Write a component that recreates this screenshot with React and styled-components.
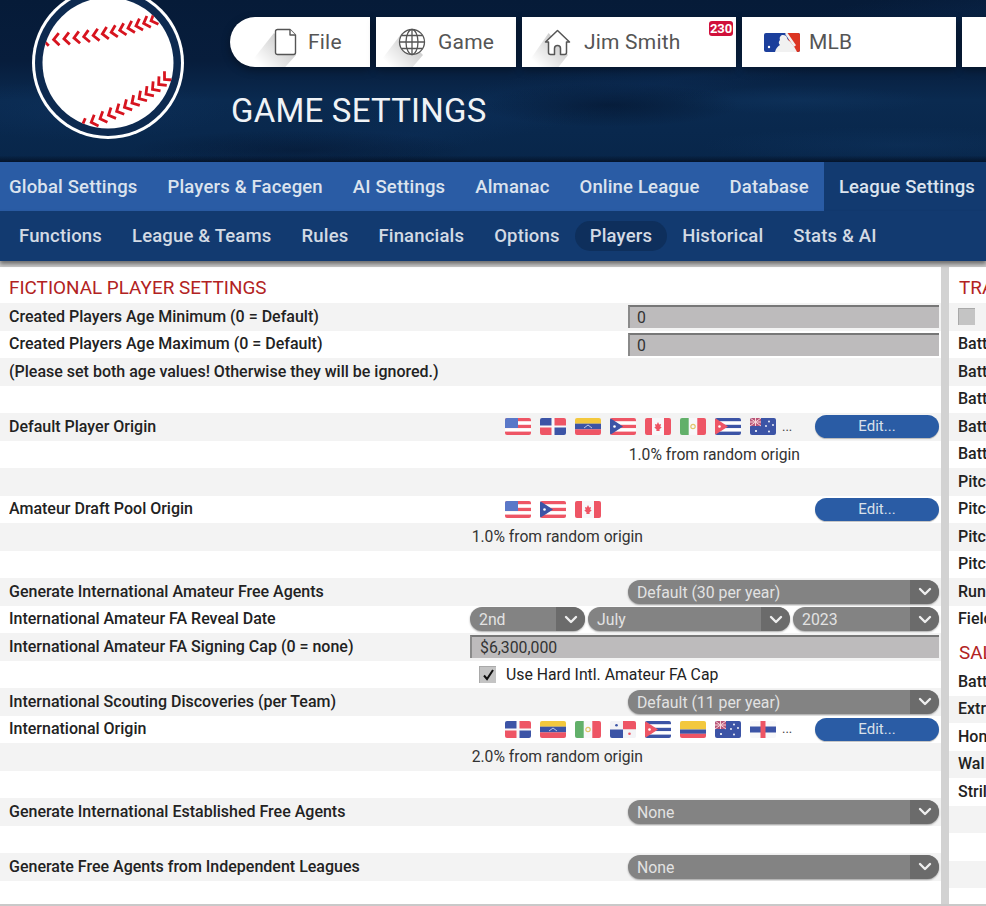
import React from "react";
import styled, { createGlobalStyle } from "styled-components";

const Global = createGlobalStyle`
  html, body { margin: 0; padding: 0; background: #fff; }
  body { width: 986px; height: 906px; overflow: hidden; font-family: Roboto, "Liberation Sans", sans-serif; }
  * { box-sizing: border-box; }
`;

const Page = styled.div`
  width: 986px; height: 906px; display: flex; flex-direction: column; overflow: hidden; background: #c9c9c9;
`;
const Header = styled.header`
  height: 162px; flex: none; display: flex; overflow: hidden;
  background:
    linear-gradient(180deg, rgba(3,14,32,0) 96%, rgba(3,14,32,.75) 100%),
    radial-gradient(ellipse 130px 22px at 610px 105px, rgba(4,20,44,.6), rgba(4,20,44,0)),
    radial-gradient(ellipse 170px 20px at 300px 150px, rgba(4,20,44,.5), rgba(4,20,44,0)),
    radial-gradient(ellipse 130px 14px at 800px 100px, rgba(20,60,105,.3), rgba(20,60,105,0)),
    radial-gradient(ellipse 200px 18px at 900px 145px, rgba(18,58,105,.3), rgba(18,58,105,0)),
    radial-gradient(ellipse 150px 30px at 80px 110px, rgba(16,54,100,.35), rgba(16,54,100,0)),
    linear-gradient(168deg, rgba(14,50,96,0) 50%, rgba(14,50,96,.25) 60%, rgba(14,50,96,0) 66%),
    linear-gradient(180deg, #061b38 0%, #071d3c 38%, #0a2a50 62%, #08264a 100%);
`;
const Logo = styled.svg`
  flex: none; width: 156px; height: 156px; margin: -15px 0 0 30px;
`;
const HeaderMain = styled.div`
  flex: none; margin-left: 44px; padding-top: 17px; display: flex; flex-direction: column;
`;
const NavRow = styled.nav`
  display: flex; gap: 6px; width: 800px;
`;
const NavButton = styled.div`
  position: relative; flex: none; height: 50px; width: ${p => p.$w}px; background: #fff; overflow: hidden;
  display: flex; align-items: center; padding-left: ${p => p.$pad}px; gap: ${p => p.$gap}px;
  border-radius: ${p => (p.$first ? "25px 0 0 25px" : "0")};
  box-shadow: 0 3px 8px rgba(0,0,0,.35);
  color: #555; font-size: 21px; letter-spacing: .2px;
`;
const Badge = styled.span`
  position: absolute; left: 187px; top: 4px; width: 24px; height: 15px; background: #d0103a; color: #fff;
  border-radius: 3px; font-size: 13px; line-height: 15px; font-weight: 700; text-align: center; letter-spacing: -.2px;
`;
const LongShadow = styled.span`
  position: absolute; left: ${p => p.$x}px; bottom: 0; width: ${p => p.$w}px; height: 34px;
  background: linear-gradient(45deg, rgba(0,0,0,0) 18%, rgba(0,0,0,.2) 78%);
  clip-path: polygon(55% 0, 0 100%, 78% 100%, 100% 65%);
`;
const IconGlyph = styled.svg`
  position: relative; flex: none; display: block;
`;
const NavLabel = styled.span`
  position: relative;
`;
const Title = styled.h1`
  margin: 25px 0 0 1px; color: #f0f3f6; font-weight: 400; font-size: 33px; line-height: 38px; letter-spacing: .22px; white-space: nowrap;
`;
const TabBar = styled.div`
  height: 49px; flex: none; display: flex; background: #2a5ca5; color: #dbe3ee;
`;
const Tab = styled.div`
  padding: 0 15px; display: flex; align-items: center; font-size: 18.5px; font-weight: 500; letter-spacing: .17px; white-space: nowrap;
  &:first-child { padding-left: 9px; }
  ${p => p.$active && "background:#123a70; flex:1;"}
`;
const SubBar = styled.div`
  height: 50px; flex: none; display: flex; align-items: center; padding-left: 4px; background: #123a70; color: #d3dae4;
  box-shadow: 0 3px 4px rgba(0,0,0,.45); position: relative;
`;
const SubTab = styled.div`
  height: 30px; padding: 0 15px 1px; display: flex; align-items: center; border-radius: 15px; font-size: 18.5px; font-weight: 500; letter-spacing: .17px; white-space: nowrap;
  ${p => p.$active && "background:#0e2f5c;"}
`;
const Body = styled.div`
  flex: none; height: 637px; margin-top: 6px; display: flex; background: #fff;
`;
const LeftPanel = styled.section`
  flex: none; width: 941px; background: #fff; overflow: hidden;
`;
const Splitter = styled.div`
  flex: none; width: 8px; background: #d2d2d2;
`;
const RightPanel = styled.section`
  flex: 1; min-width: 0; background: #fff; overflow: hidden;
`;
const SectionTitle = styled.h2`
  margin: 0; height: ${p => p.$h || 36}px; padding: ${p => p.$top ?? 9}px 0 0 ${p => p.$x}px; color: #b22222; font-weight: 400; font-size: 18.9px; line-height: 23px; white-space: nowrap; overflow: hidden;
`;
const Row = styled.div`
  height: 27.5px; display: flex; align-items: center; padding: 0 2px 0 9px; white-space: nowrap; overflow: hidden;
  background: ${p => (p.$grey ? "#f3f3f3" : "#fff")};
`;
const Label = styled.span`
  flex: 1; min-width: 0; font-size: 16px; font-weight: 500; color: #222; overflow: hidden; margin-top: -1px;
`;
const Control = styled.div`
  flex: none; width: ${p => p.$w}px; display: flex; align-items: center; gap: ${p => p.$gap || 0}px;
  ${p => p.$end && "margin-left:auto;"}
`;
const Input = styled.div`
  width: 100%; height: 23px; background: #bdbbbc; border-top: 2px solid #777; border-left: 2px solid #8a8a8a;
  color: #333; font-size: 15.8px; line-height: 21px; padding-left: ${p => p.$pad}px;
`;
const Select = styled.div`
  position: relative; flex: ${p => (p.$w ? "none" : 1)}; width: ${p => (p.$w ? p.$w + "px" : "auto")}; height: 24px; background: #838383; border-radius: 12px; overflow: hidden;
  color: #e2e2e2; font-size: 15.8px; line-height: 25px; padding-left: 9px; box-shadow: 0 1px 2px rgba(0,0,0,.35);
`;
const SelectArrow = styled.span`
  position: absolute; right: 0; top: 0; bottom: 0; width: 29px; background: #6b6b6b; display: flex; align-items: center; justify-content: center;
`;
const EditButton = styled.div`
  flex: none; margin-left: auto; width: 124px; height: 23px; border-radius: 12px; background: #2a5ca5; color: #d9e0ea;
  font-size: 15px; line-height: 23px; text-align: center; box-shadow: 0 1px 1px rgba(0,0,0,.25);
`;
const Flags = styled.div`
  display: flex; align-items: center; gap: 9px;
`;
const More = styled.span`
  margin-left: -3px; font-size: 13px; color: #444; line-height: 20px;
`;
const Note = styled.span`
  margin-left: auto; margin-right: ${p => p.$inset}px; font-size: 15.7px; color: #333;
`;
const CheckRow = styled.div`
  display: flex; align-items: center; gap: 10px; padding-left: 9px; font-size: 15.8px; color: #222;
`;
const CheckBox = styled.span`
  flex: none; width: 17px; height: 17px; background: #c4c4c4; display: flex; align-items: center; justify-content: center;
  border-top: 1px solid #a9a9a9; border-left: 1px solid #a9a9a9;
`;
const RLabel = styled.span`
  font-size: 16px; font-weight: 500; color: #222; margin-top: -1px;
`;

const R = "#ee5565", B = "#3c54a6", W = "#fff";
function Flag({ name }) {
  const stripes = (cols) => cols.map((c, i) => <rect key={i} x="0" y={(i * 17) / cols.length} width="26" height={17 / cols.length + .1} fill={c} />);
  let content = null;
  if (name === "us") content = <>{stripes([R, W, R, W, R])}<rect width="13" height="10" fill="#5a78c8" /></>;
  if (name === "do") content = <><rect width="11.5" height="7.5" fill={B} /><rect x="14.5" width="11.5" height="7.5" fill={R} /><rect y="9.5" width="11.5" height="7.5" fill={R} /><rect x="14.5" y="9.5" width="11.5" height="7.5" fill={B} /></>;
  if (name === "ve") content = <>{stripes(["#f3c83d", B, R])}<path d="M9 10l4-3 4 3" fill="none" stroke="#dfe4f4" strokeWidth=".8" /></>;
  if (name === "pr") content = <>{stripes([R, W, R, W, R])}<path d="M0 0L13 8.5 0 17z" fill={B} /><circle cx="4.5" cy="8.5" r="1.3" fill={W} /></>;
  if (name === "ca") content = <><rect width="7" height="17" fill={R} /><rect x="19" width="7" height="17" fill={R} /><path d="M13 4l1.2 2.5 1.8-.6-.6 3 1.4.3-2.4 2.3.3 1.5h-3.4l.3-1.5-2.4-2.3 1.4-.3-.6-3 1.8.6z" fill={R} /></>;
  if (name === "mx") content = <><rect width="8.7" height="17" fill="#62b06a" /><rect x="17.3" width="8.7" height="17" fill={R} /><circle cx="13" cy="8.5" r="2.2" fill="none" stroke="#e2c56a" strokeWidth="1.2" /></>;
  if (name === "cu") content = <>{stripes([B, W, B, W, B])}<path d="M0 0L13 8.5 0 17z" fill={R} /><circle cx="4.5" cy="8.5" r="1.3" fill={W} /></>;
  if (name === "au") content = <><rect width="26" height="17" fill={B} /><rect width="11" height="8" fill={R} opacity=".7" /><path d="M5.5 0v8M0 4h11M0 0l11 8M11 0L0 8" stroke="#f6d5d8" strokeWidth="1" /><circle cx="6" cy="13" r="1.1" fill={W} /><circle cx="19" cy="3.5" r=".9" fill={W} /><circle cx="23" cy="7" r=".9" fill={W} /><circle cx="16" cy="8" r=".9" fill={W} /><circle cx="19" cy="13.5" r=".9" fill={W} /></>;
  if (name === "pa") content = <><rect width="13" height="8.5" fill="#f3f3f6" /><rect x="13" width="13" height="8.5" fill={R} /><rect y="8.5" width="13" height="8.5" fill={B} /><rect x="13" y="8.5" width="13" height="8.5" fill="#f3f3f6" /><circle cx="6.5" cy="4.2" r="1.3" fill={B} /><circle cx="19.5" cy="12.8" r="1.3" fill={R} /></>;
  if (name === "co") content = <><rect width="26" height="8.5" fill="#f3c83d" /><rect y="8.5" width="26" height="4.3" fill={B} /><rect y="12.8" width="26" height="4.2" fill={R} /></>;
  if (name === "an") content = <><rect y="5.5" width="26" height="6" fill={B} /><rect x="10.5" width="5" height="17" fill={R} /></>;
  return (
    <IconGlyph width="26" height="17" viewBox="0 0 26 17">
      <clipPath id={`f-${name}`}><rect width="26" height="17" rx="2" /></clipPath>
      <g clipPath={`url(#f-${name})`}><rect width="26" height="17" fill="#f8f8fa" />{content}</g>
    </IconGlyph>
  );
}

const Chevron = () => (
  <svg width="14" height="9" viewBox="0 0 14 9"><path d="M2 2l5 5 5-5" fill="none" stroke="#eee" strokeWidth="2.4" strokeLinecap="round" strokeLinejoin="round" /></svg>
);
const SelectBox = ({ w, children }) => (
  <Select $w={w}>{children}<SelectArrow><Chevron /></SelectArrow></Select>
);

const quad = (p0, p1, p2, t) => [
  (1 - t) ** 2 * p0[0] + 2 * (1 - t) * t * p1[0] + t * t * p2[0],
  (1 - t) ** 2 * p0[1] + 2 * (1 - t) * t * p1[1] + t * t * p2[1],
];
function Stitches({ p0, p1, p2, n }) {
  const out = [];
  for (let i = 0; i < n; i++) {
    const t = i / (n - 1);
    const [x, y] = quad(p0, p1, p2, t);
    const [x2, y2] = quad(p0, p1, p2, Math.min(1, t + 0.01));
    const [x1, y1] = quad(p0, p1, p2, Math.max(0, t - 0.01));
    const a = (Math.atan2(y2 - y1, x2 - x1) * 180) / Math.PI;
    out.push(<path key={i} transform={`translate(${x} ${y}) rotate(${a})`} d="M3.5 -6L-2 0 3.5 6" fill="none" stroke="#d7141f" strokeWidth="2.8" />);
  }
  return <g>{out}</g>;
}
const Baseball = () => (
  <Logo viewBox="0 0 156 156">
    <circle cx="78" cy="78" r="76" fill="#fff" />
    <circle cx="78" cy="78" r="73" fill="#0d2a50" />
    <circle cx="78" cy="78" r="65.5" fill="#fff" />
    <clipPath id="ball"><circle cx="78" cy="78" r="65.5" /></clipPath>
    <g clipPath="url(#ball)">
      <Stitches p0={[15, 55]} p1={[85, 52]} p2={[130, 32]} n={14} />
      <Stitches p0={[54, 140]} p1={[105, 122]} p2={[136, 93]} n={12} />
    </g>
  </Logo>
);

const FileIcon = () => (
  <IconGlyph width="24" height="28" viewBox="0 0 24 28" fill="#fff" stroke="#555" strokeWidth="1.4" strokeLinejoin="round">
    <path d="M3.5 1.5h12.5l5.5 5.5v17.5a2 2 0 0 1-2 2h-16a2 2 0 0 1-2-2v-21a2 2 0 0 1 2-2z" />
    <path d="M16 1.5v5.5h5.5" />
  </IconGlyph>
);
const GlobeIcon = () => (
  <IconGlyph width="28" height="28" viewBox="0 0 28 28" fill="#fff" stroke="#555" strokeWidth="1.3">
    <circle cx="14" cy="14" r="12.5" />
    <ellipse cx="14" cy="14" rx="6" ry="12.5" />
    <path d="M14 1.5v25M1.5 14h25M3.5 7.5h21M3.5 20.5h21" fill="none" />
  </IconGlyph>
);
const HomeIcon = () => (
  <IconGlyph width="27" height="27" viewBox="0 0 27 27" fill="#fff" stroke="#555" strokeWidth="1.5" strokeLinejoin="round">
    <path d="M1.5 13L13.5 1.5 25.5 13 22.5 13v10.5a2 2 0 0 1-2 2h-4v-6a3 3 0 0 0-6 0v6h-4a2 2 0 0 1-2-2V13z" />
  </IconGlyph>
);
const MlbLogo = () => (
  <IconGlyph width="36" height="19" viewBox="0 0 36 19">
    <rect width="36" height="19" rx="2" fill="#1c3f9c" />
    <path d="M23 0h11a2 2 0 0 1 2 2v15a2 2 0 0 1-2 2h-7z" fill="#dc3522" />
    <path d="M11 19c1-4 3-6 5-7-2-2-1-4 0-5-1-3 1-5 3-5s4 1 4 3l1 2c3 2 6 6 8 10l1 2z" fill="#f1f1f1" />
    <path d="M22 0l9 13" stroke="#f1f1f1" strokeWidth="2.5" />
    <circle cx="5" cy="14" r="1.2" fill="#fff" />
  </IconGlyph>
);

const usList = ["us", "do", "ve", "pr", "ca", "mx", "cu", "au"];
const intlList = ["do", "ve", "mx", "pa", "cu", "co", "au", "an"];

const FlagRow = ({ list, dots }) => (
  <Control $w={434}>
    <Flags>
      {list.map((f, i) => <Flag key={i} name={f} />)}
      {dots && <More>...</More>}
    </Flags>
    <EditButton>Edit...</EditButton>
  </Control>
);

const rightTop = ["Batt", "Batt", "Batt", "Batt", "Batt", "Pitc", "Pitc", "Pitc", "Pitc", "Run", "Field"];
const rightBottom = ["Batt", "Extr", "Hon", "Wal", "Stril", "", "", "", ""];

export default function App() {
  return (
    <Page>
      <Global />
      <Header>
        <Baseball />
        <HeaderMain>
          <NavRow>
            <NavButton $w={140} $pad={44} $gap={10} $first>
              <LongShadow $x={17} $w={49} />
              <FileIcon />
              <NavLabel>File</NavLabel>
            </NavButton>
            <NavButton $w={140} $pad={22} $gap={12}>
              <LongShadow $x={0} $w={47} />
              <GlobeIcon />
              <NavLabel>Game</NavLabel>
            </NavButton>
            <NavButton $w={214} $pad={22} $gap={13}>
              <LongShadow $x={3} $w={43} />
              <HomeIcon />
              <NavLabel>Jim Smith</NavLabel>
              <Badge>230</Badge>
            </NavButton>
            <NavButton $w={214} $pad={22} $gap={9}>
              <MlbLogo />
              <NavLabel>MLB</NavLabel>
            </NavButton>
            <NavButton $w={60} $pad={0} $gap={0} />
          </NavRow>
          <Title>GAME SETTINGS</Title>
        </HeaderMain>
      </Header>
      <TabBar>
        {["Global Settings", "Players & Facegen", "AI Settings", "Almanac", "Online League", "Database"].map(t => <Tab key={t}>{t}</Tab>)}
        <Tab $active>League Settings</Tab>
      </TabBar>
      <SubBar>
        {["Functions", "League & Teams", "Rules", "Financials", "Options"].map(t => <SubTab key={t}>{t}</SubTab>)}
        <SubTab $active>Players</SubTab>
        {["Historical", "Stats & AI"].map(t => <SubTab key={t}>{t}</SubTab>)}
      </SubBar>
      <Body>
        <LeftPanel>
          <SectionTitle $x={9}>FICTIONAL PLAYER SETTINGS</SectionTitle>
          <Row $grey><Label>Created Players Age Minimum (0 = Default)</Label><Control $w={311}><Input $pad={7}>0</Input></Control></Row>
          <Row><Label>Created Players Age Maximum (0 = Default)</Label><Control $w={311}><Input $pad={7}>0</Input></Control></Row>
          <Row $grey><Label>(Please set both age values! Otherwise they will be ignored.)</Label></Row>
          <Row />
          <Row $grey><Label>Default Player Origin</Label><FlagRow list={usList} dots /></Row>
          <Row><Note $inset={139}>1.0% from random origin</Note></Row>
          <Row $grey />
          <Row><Label>Amateur Draft Pool Origin</Label><FlagRow list={["us", "pr", "ca"]} /></Row>
          <Row $grey><Note $inset={296}>1.0% from random origin</Note></Row>
          <Row />
          <Row $grey><Label>Generate International Amateur Free Agents</Label><Control $w={311}><SelectBox>Default (30 per year)</SelectBox></Control></Row>
          <Row><Label>International Amateur FA Reveal Date</Label><Control $w={469} $gap={3}><SelectBox w={115}>2nd</SelectBox><SelectBox w={202}>July</SelectBox><SelectBox w={146}>2023</SelectBox></Control></Row>
          <Row $grey><Label>International Amateur FA Signing Cap (0 = none)</Label><Control $w={469}><Input $pad={8}>$6,300,000</Input></Control></Row>
          <Row><Control $w={469} $end><CheckRow><CheckBox><svg width="13" height="12" viewBox="0 0 13 12"><path d="M2 6.5l3 3.5 6-9" fill="none" stroke="#111" strokeWidth="2" /></svg></CheckBox>Use Hard Intl. Amateur FA Cap</CheckRow></Control></Row>
          <Row $grey><Label>International Scouting Discoveries (per Team)</Label><Control $w={311}><SelectBox>Default (11 per year)</SelectBox></Control></Row>
          <Row><Label>International Origin</Label><FlagRow list={intlList} dots /></Row>
          <Row $grey><Note $inset={296}>2.0% from random origin</Note></Row>
          <Row />
          <Row $grey><Label>Generate International Established Free Agents</Label><Control $w={311}><SelectBox>None</SelectBox></Control></Row>
          <Row />
          <Row $grey><Label>Generate Free Agents from Independent Leagues</Label><Control $w={311}><SelectBox>None</SelectBox></Control></Row>
        </LeftPanel>
        <Splitter />
        <RightPanel>
          <SectionTitle $x={10}>TRA</SectionTitle>
          <Row $grey><CheckBox /></Row>
          {rightTop.map((t, i) => <Row key={i} $grey={i % 2 === 1}><RLabel>{t}</RLabel></Row>)}
          <SectionTitle $x={10} $h={35} $top={8}>SAL</SectionTitle>
          {rightBottom.map((t, i) => <Row key={i} $grey={i % 2 === 1}><RLabel>{t}</RLabel></Row>)}
        </RightPanel>
      </Body>
    </Page>
  );
}
